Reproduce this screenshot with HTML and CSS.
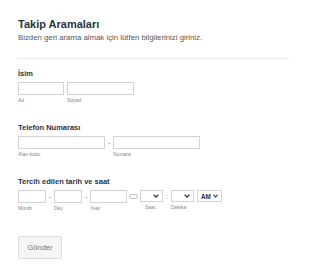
FILE: index.html
```html
<!DOCTYPE html>
<html lang="tr">
<head>
    <meta charset="UTF-8">
    <meta name="viewport" content="width=device-width, initial-scale=1.0">
    <title>Takip Aramaları</title>
    <link rel="stylesheet" href="styles.css">
</head>
<body>
    <form class="form">
        <div class="header">
            <h1>Takip Aramaları</h1>
            <p>Bizden geri arama almak için lütfen bilgilerinizi giriniz.</p>
        </div>

        <div class="field field-first">
            <label class="label">İsim</label>
            <div class="row">
                <div class="part">
                    <input type="text" class="inp w-ad">
                    <span class="sub">Ad</span>
                </div>
                <div class="part">
                    <input type="text" class="inp w-soyad">
                    <span class="sub">Soyad</span>
                </div>
            </div>
        </div>

        <div class="field">
            <label class="label">Telefon Numarası</label>
            <div class="row">
                <div class="part">
                    <input type="text" class="inp w-phone">
                    <span class="sub">Alan kodu</span>
                </div>
                <span class="sep">-</span>
                <div class="part">
                    <input type="text" class="inp w-phone">
                    <span class="sub">Numara</span>
                </div>
            </div>
        </div>

        <div class="field">
            <label class="label">Tercih edilen tarih ve saat</label>
            <div class="row">
                <div class="part">
                    <input type="text" class="inp w-md">
                    <span class="sub">Month</span>
                </div>
                <span class="sep">-</span>
                <div class="part">
                    <input type="text" class="inp w-md">
                    <span class="sub">Day</span>
                </div>
                <span class="sep">-</span>
                <div class="part">
                    <input type="text" class="inp w-year">
                    <span class="sub">Year</span>
                </div>
                <span class="cal">
                    <svg width="9" height="5" viewBox="0 0 9 5"><rect x="0.5" y="0.5" width="8" height="4" rx="2" fill="none" stroke="#b9bec7" stroke-width="1"/></svg>
                </span>
                <div class="part">
                    <div class="sel w-time">
                        <span class="sel-text"></span>
                        <svg width="6" height="4" viewBox="0 0 6 4"><path d="M0.6 0.6 L3 3 L5.4 0.6" fill="none" stroke="#2c3345" stroke-width="1.3"/></svg>
                    </div>
                    <span class="sub sub-center">Saat</span>
                </div>
                <span class="sep">:</span>
                <div class="part">
                    <div class="sel w-time">
                        <span class="sel-text"></span>
                        <svg width="6" height="4" viewBox="0 0 6 4"><path d="M0.6 0.6 L3 3 L5.4 0.6" fill="none" stroke="#2c3345" stroke-width="1.3"/></svg>
                    </div>
                    <span class="sub">Dakika</span>
                </div>
                <div class="part">
                    <div class="sel w-ampm">
                        <span class="sel-text">AM</span>
                        <svg width="6" height="4" viewBox="0 0 6 4"><path d="M0.6 0.6 L3 3 L5.4 0.6" fill="none" stroke="#2c3345" stroke-width="1.3"/></svg>
                    </div>
                </div>
            </div>
        </div>

        <button type="submit" class="send">Gönder</button>
    </form>
</body>
</html>
```

FILE: styles.css
```css
/* Genel */
body {
    margin: 0;
    background-color: #fff;
    font-family: 'Liberation Sans', Arial, sans-serif;
    color: #2c3345;
}

.form {
    padding: 18px 18px 0 18px;
}

.header {
    border-bottom: 1px solid #eaebed;
    padding-bottom: 16px;
    margin-right: 2px;
}

.header h1 {
    margin: 0;
    font-size: 11px;
    line-height: 13px;
    font-weight: bold;
    color: #2c3345;
}

.header p {
    margin: 2px 0 0 0;
    font-size: 7.8px;
    line-height: 9px;
    color: #555;
}

/* Campos */
.field {
    margin-top: 20px;
}

.field-first {
    margin-top: 10px;
}

.label {
    display: block;
    font-size: 7.5px;
    line-height: 9px;
    font-weight: bold;
    margin-bottom: 4px;
}

.row {
    display: flex;
    align-items: flex-start;
    gap: 3px;
}

.part {
    display: flex;
    flex-direction: column;
}

.inp {
    height: 13px;
    box-sizing: border-box;
    border: 1px solid #d3d3d3;
    border-radius: 0;
    margin: 0;
    padding: 0 2px;
    font-size: 7px;
}

.w-ad { width: 46px; }
.w-soyad { width: 67px; }
.w-phone { width: 87px; }
.w-md { width: 28px; }
.w-year { width: 37px; }
.w-time { width: 23px; }
.w-ampm { width: 25px; }

.sub {
    font-size: 5px;
    line-height: 6px;
    color: #888;
    margin-top: 2px;
}

.sub-center {
    padding-left: 5px;
}

.sep {
    font-size: 7px;
    line-height: 13px;
    color: #888;
    width: 2px;
    text-align: center;
}

.cal {
    display: flex;
    height: 13px;
    align-items: center;
    margin: 0 -1px;
}

.sel {
    display: flex;
    align-items: center;
    justify-content: space-between;
    gap: 2px;
    height: 12px;
    box-sizing: border-box;
    border: 1px solid #d3d3d3;
    padding: 0 3px 0 3px;
}

.sel-text {
    font-size: 6.3px;
    font-weight: bold;
    color: #2c3345;
}

.send {
    margin-top: 25px;
    width: 44px;
    height: 23px;
    background-color: #f5f5f6;
    border: 1px solid #d8dbe0;
    border-radius: 2px;
    color: #6f7684;
    font-family: 'Liberation Sans', Arial, sans-serif;
    font-size: 7.5px;
    cursor: pointer;
}
```
